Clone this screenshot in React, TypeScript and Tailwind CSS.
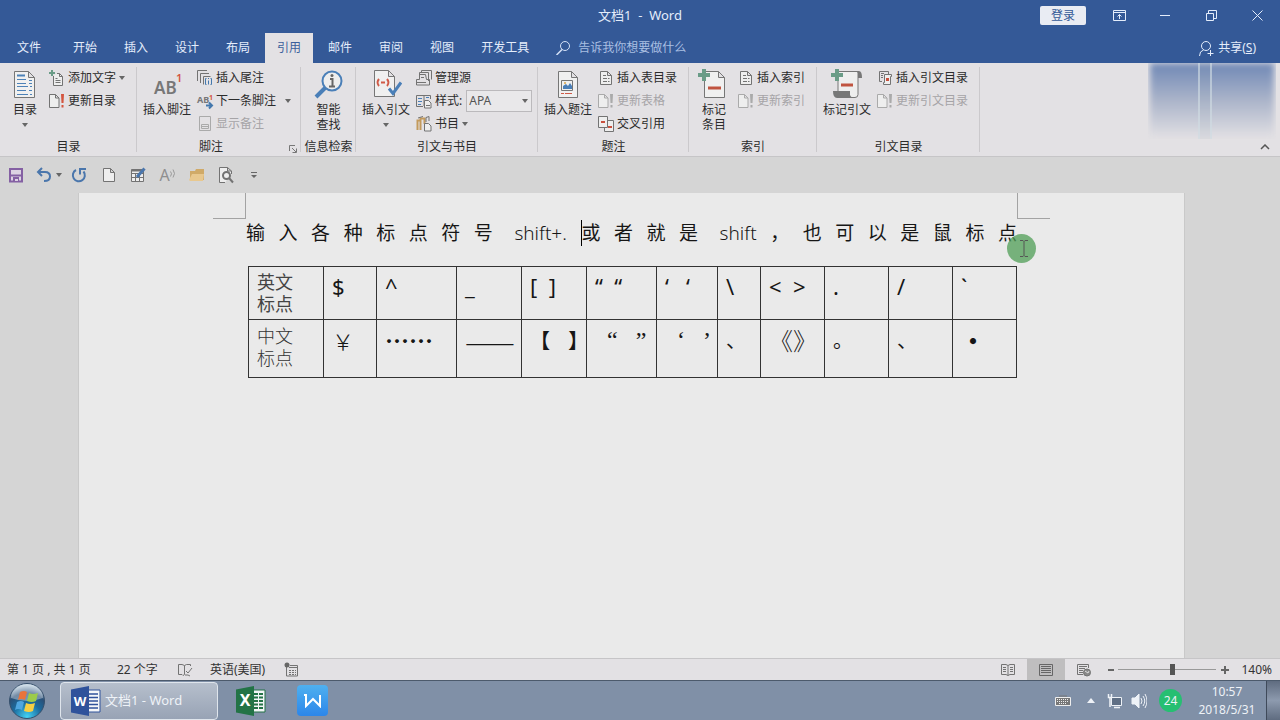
import type { ReactNode } from 'react';
import { useState } from 'react';
import clsx from 'clsx';

interface ChildrenProps {
  children: ReactNode;
}

const tabs = ['开始', '插入', '设计', '布局', '引用', '邮件', '审阅', '视图', '开发工具'];

const columns = [75, 53, 80, 65, 65, 70, 61, 43, 64, 64, 64, 64];
const englishMarks = ['$', '^', '_', '[\u00a0\u00a0]', '“\u00a0\u00a0“', '‘\u00a0\u00a0\u00a0‘', '\\', '<\u00a0\u00a0>', '.', '/', '`'];
const chineseMarks = [
  { text: '￥', style: 'text-[22px] font-light' },
  { text: '……', style: 'text-2xl font-bold' },
  { text: '——', style: 'text-3xl font-light' },
  { text: '【\u00a0\u00a0\u00a0\u00a0】', style: 'text-xl font-bold' },
  { text: '\u00a0\u00a0“\u00a0\u00a0\u00a0”', style: 'font-["Liberation_Serif",serif] text-2xl' },
  { text: '\u00a0\u00a0‘\u00a0\u00a0\u00a0’', style: 'font-["Liberation_Serif",serif] text-2xl' },
  { text: '、', style: 'text-xl' },
  { text: '《》', style: 'text-2xl font-light' },
  { text: '。', style: 'text-xl' },
  { text: '、', style: 'text-xl' },
  { text: '・', style: 'text-2xl font-bold' },
];

function Caret() {
  return (
    <svg viewBox="0 0 6 4" className="h-1 w-1.5 shrink-0" fill="#666">
      <path d="M0 0h6L3 4z" />
    </svg>
  );
}

function Icon({ children }: ChildrenProps) {
  return (
    <svg viewBox="0 0 16 16" className="h-4 w-4 shrink-0 overflow-visible" fill="none" stroke="#737373">
      {children}
    </svg>
  );
}

function BigIcon({ children }: ChildrenProps) {
  return (
    <svg viewBox="0 0 32 36" className="h-9 w-8 shrink-0" fill="none" stroke="#767676">
      {children}
    </svg>
  );
}

function UpdateIcon({ disabled }: { disabled?: boolean }) {
  return (
    <Icon>
      <path d="M.5 1.500h6l3.500 3.500v9.500H.5zM6.500 1.500V5H10" fill="#eee" stroke={disabled ? '#aaa' : '#737373'} />
      <path d="M12 1h3l-.5 9h-2zM12.500 12h2v2.500h-2z" fill={disabled ? '#aaa' : '#d4553f'} stroke="none" />
    </Icon>
  );
}

function ListPageIcon() {
  return (
    <Icon>
      <path d="M2.500 1.500h7l4 4v9h-11zM9.500 1.500v4h4" fill="#eee" />
      <path d="M5 5.500h3M5 8.500h6.500M5 11.500h6.500" strokeDasharray="4 1" />
    </Icon>
  );
}

interface SmallButtonProps {
  icon: ReactNode;
  label: string;
  disabled?: boolean;
  menu?: boolean;
  split?: boolean;
}

function SmallButton({ icon, label, disabled, menu, split }: SmallButtonProps) {
  return (
    <button type="button" disabled={disabled} className="flex h-[23px] items-center gap-[3px] whitespace-nowrap disabled:text-[#a6a4a7]">
      {icon}
      <span>{label}</span>
      {menu && <span className={clsx(split && 'ml-1.5')}><Caret /></span>}
    </button>
  );
}

function BigButton({ icon, lines, menu }: { icon: ReactNode; lines: string[]; menu?: boolean }) {
  return (
    <button type="button" className="flex w-12 shrink-0 flex-col items-center whitespace-nowrap leading-[15px]">
      {icon}
      {lines.map((line) => (
        <span key={line}>{line}</span>
      ))}
      {menu && <span className="mt-1.5"><Caret /></span>}
    </button>
  );
}

interface GroupProps extends ChildrenProps {
  title: string;
  width: string;
  inset?: string;
  launcher?: boolean;
}

function Group({ title, width, inset = 'pl-1.5', launcher, children }: GroupProps) {
  return (
    <section className={clsx('relative flex shrink-0 flex-col pt-[3px] after:absolute after:right-0 after:top-1 after:h-[85px] after:w-px after:bg-[#cbc9cc]', width)}>
      <div className={clsx('flex h-[72px]', inset)}>{children}</div>
      <div className="flex h-[18px] items-center">
        <h2 className="flex-1 whitespace-nowrap text-center leading-[18px]">{title}</h2>
        {launcher && (
          <button type="button" aria-label="脚注选项" className="mr-1 flex h-3 w-3 items-end justify-end">
            <svg viewBox="0 0 8 8" className="h-2 w-2" fill="none" stroke="#777">
              <path d="M.5 6V.5H6M3 3l4 4M7.500 3.500v4h-4" />
            </svg>
          </button>
        )}
      </div>
    </section>
  );
}

function Ribbon() {
  return (
    <div className="relative flex h-[94px] border-b border-[#c6c5c7] bg-[#e3e1e4] text-[#2b2b2b]">
      <Group title="目录" width="w-[137px]" inset="pl-px">
        <BigButton
          lines={['目录']}
          menu
          icon={
            <BigIcon>
              <path d="M5.500 5.500h14l6 6v20h-20zM19.500 5.500v6h6" fill="#f0f0f0" />
              <path d="M8 9.500h8" stroke="#4d82b8" strokeWidth="2" />
              <path d="M8 13.500h9M8 17.500h9M8 20.500h11M8 24.500h9M8 28.500h11M20 14.500h3M20 17.500h3M21 20.500h2M20 24.500h3M21 28.500h2" stroke="#4d82b8" />
            </BigIcon>
          }
        />
        <div>
          <SmallButton
            label="添加文字"
            menu
            icon={
              <Icon>
                <path d="M4.500 6v9.500h9v-9l-3-3H8M10.500 3.500v3h3" fill="#eee" />
                <path d="M6.500 8.500h2M6.500 10.500h5M6.500 12.500h5" />
                <path d="M3 0v6M0 3h6" stroke="#6a9c87" strokeWidth="2" />
              </Icon>
            }
          />
          <SmallButton label="更新目录" icon={<UpdateIcon />} />
        </div>
      </Group>

      <Group title="脚注" width="w-[164px]" launcher>
        <BigButton
          lines={['插入脚注']}
          icon={
            <BigIcon>
              <text x="3" y="28" fontSize="17" fontWeight="600" fill="#777" stroke="none">AB</text>
              <text x="25" y="16" fontSize="11" fontWeight="600" fill="#d4553f" stroke="none">1</text>
            </BigIcon>
          }
        />
        <div className="ml-1.5">
          <SmallButton
            label="插入尾注"
            icon={
              <Icon>
                <path d="M.5 11V.5H10M3.500 13V3.500H12M13.500 6.500h-7v8" />
                <path d="M9.500 8.500h-1v6h1M13.500 8.500h1v6h-1M11.500 10.500v4M11.500 8v1" stroke="#4478ad" />
              </Icon>
            }
          />
          <SmallButton
            label="下一条脚注"
            menu
            split
            icon={
              <Icon>
                <text x="0" y="10" fontSize="9" fontWeight="700" fill="#777" stroke="none">AB</text>
                <text x="12" y="7" fontSize="7" fontWeight="700" fill="#d4553f" stroke="none">1</text>
                <path d="M9 12.500h6M12 9.500l3 3-3 3" stroke="#4478ad" strokeWidth="2" />
              </Icon>
            }
          />
          <SmallButton
            label="显示备注"
            disabled
            icon={
              <Icon>
                <path d="M2.500.500h11v14h-11zM4.500 8.500h7v4h-7zM4.500 10.500h7" stroke="#aaa" />
              </Icon>
            }
          />
        </div>
      </Group>

      <Group title="信息检索" width="w-[55px]" inset="justify-center">
        <BigButton
          lines={['智能', '查找']}
          icon={
            <BigIcon>
              <path d="M13 21L3 31" stroke="#4a7fb8" strokeWidth="4" />
              <circle cx="19" cy="15" r="9.500" fill="#eee" stroke="#4a7fb8" strokeWidth="2" />
              <path d="M17 13h2.500v7M16 20.500h6" stroke="#666" strokeWidth="2" />
              <circle cx="19" cy="9.500" r="1.500" fill="#666" stroke="none" />
            </BigIcon>
          }
        />
      </Group>

      <Group title="引文与书目" width="w-[182px]">
        <BigButton
          lines={['插入引文']}
          menu
          icon={
            <BigIcon>
              <path d="M4.500 4.500h14l6 6v20h-20zM18.500 4.500v6h6" fill="#f0f0f0" />
              <path d="M9 13q-3 3.500 0 7M17 13q3 3.500 0 7M11 16.500h4" stroke="#d05b48" strokeWidth="2" />
              <path d="M19 22.500l4 5 8-11" stroke="#4a7fb8" strokeWidth="3" />
            </BigIcon>
          }
        />
        <div className="ml-1.5">
          <SmallButton
            label="管理源"
            icon={
              <Icon>
                <path d="M5.500 3V.5h10v9M3.500 5V2.500h9V11M.5 15V9.500h3v-5h6l1 5h3V15z" />
                <path d="M1 12.500h9M5 7.500h3" />
              </Icon>
            }
          />
          <div className="flex items-center">
            <label htmlFor="citation-style" className="flex h-[23px] items-center gap-[3px]">
              <Icon>
                <path d="M8 3v10M8 2.500H.5v11H7M8 2.500h6.500V6" />
                <path d="M2 5.500h4M2 8.500h4M2 11.500h3M10 4.500h3" stroke="#4a7fb8" />
                <path d="M8.500 7.500h4l2.500 2.500v5H8.500zM10 12.500h4" fill="#eee" />
              </Icon>
              <span>样式:</span>
            </label>
            <span className="relative ml-1">
              <select id="citation-style" defaultValue="APA" className="block h-[22px] w-[66px] appearance-none border border-[#bbb9bc] bg-[#e9e8ea] px-0.5 text-xs text-[#555]">
                <option>APA</option>
                <option>MLA</option>
              </select>
              <span className="pointer-events-none absolute inset-y-0 right-1 flex items-center"><Caret /></span>
            </span>
          </div>
          <SmallButton
            label="书目"
            menu
            icon={
              <Icon>
                <path d="M1.500 14V4.500h3V14M4.500 13V2.500h4V8" stroke="#c39a5c" strokeWidth="2" />
                <path d="M10 6V1.500l3-1V5M2 2l5-1.500" />
                <path d="M8.500 7.500h4l2.500 2.500v5H8.500z" fill="#eee" />
              </Icon>
            }
          />
        </div>
      </Group>

      <Group title="题注" width="w-[151px]">
        <BigButton
          lines={['插入题注']}
          icon={
            <BigIcon>
              <path d="M6.500 5.500h13l6 6v20h-19zM19.500 5.500v6h6" fill="#f0f0f0" />
              <path d="M9.500 14.500h11v10h-11z" />
              <path d="M11 23v-3l3-2 2 2 2-3 2 3v3z" fill="#4a7fb8" stroke="none" />
              <circle cx="13" cy="17" r="1" fill="#d9a648" stroke="none" />
              <path d="M9 27.500h3M13 27.500h7" stroke="#d05b48" strokeWidth="1" />
            </BigIcon>
          }
        />
        <div className="ml-1.5">
          <SmallButton label="插入表目录" icon={<ListPageIcon />} />
          <SmallButton label="更新表格" disabled icon={<UpdateIcon disabled />} />
          <SmallButton
            label="交叉引用"
            icon={
              <Icon>
                <path d="M.5.5h9v11h-9zM10 4.500h5.500v11h-9V12" fill="#eee" />
                <path d="M3 6h4M10 11h4" stroke="#c9503e" strokeWidth="2" />
              </Icon>
            }
          />
        </div>
      </Group>

      <Group title="索引" width="w-[128px]" inset="pl-px">
        <BigButton
          lines={['标记', '条目']}
          icon={
            <BigIcon>
              <path d="M6.500 5.500h14l6 6v20h-20zM20.500 5.500v6h6" fill="#f0f0f0" />
              <path d="M10 22h13" stroke="#c05440" strokeWidth="3" />
              <path d="M6 3v12M0 9h12" stroke="#6a9c87" strokeWidth="4" />
            </BigIcon>
          }
        />
        <div>
          <SmallButton label="插入索引" icon={<ListPageIcon />} />
          <SmallButton label="更新索引" disabled icon={<UpdateIcon disabled />} />
        </div>
      </Group>

      <Group title="引文目录" width="w-[163px]">
        <BigButton
          lines={['标记引文']}
          icon={
            <BigIcon>
              <path d="M7 5.500h20v23q0 3-3 3H8v-6h-1z" fill="#eee" />
              <path d="M25 5h3q3 0 3 7h-4V7zM2 25h17v4q1 3 5 3H6q-4 0-4-7z" fill="#777" stroke="none" />
              <path d="M10 19h12" stroke="#c05440" strokeWidth="3" />
              <path d="M6 3v12M0 9h12" stroke="#6a9c87" strokeWidth="4" />
            </BigIcon>
          }
        />
        <div className="ml-1.5">
          <SmallButton
            label="插入引文目录"
            icon={
              <Icon>
                <path d="M5 11.500H2.500V1.500h9V4M4 3.500h3M4 5.500h2M4 7.500h2" />
                <path d="M7.500 4.500h7v2h-1v8h-7v-2h1z" fill="#eee" />
                <path d="M9 9.500h3" stroke="#c9503e" strokeWidth="3" />
              </Icon>
            }
          />
          <SmallButton label="更新引文目录" disabled icon={<UpdateIcon disabled />} />
        </div>
      </Group>

      {/* smeared reflection under the share button */}
      <div className="pointer-events-none absolute right-1 top-0 h-[76px] w-32 overflow-hidden">
        <div className="mx-0.5 h-full bg-linear-to-b from-[#7088b5] via-[#acb5ca] to-[#e3e1e4] blur-[3px]" />
        <div className="absolute inset-y-0 left-[50px] w-3.5 border-x-2 border-[#d3dfe6]/60 bg-[#8fa3ae]/10" />
      </div>
      <button type="button" aria-label="折叠功能区" className="absolute bottom-0.5 right-2 flex h-3.5 w-3.5 items-center justify-center">
        <svg viewBox="0 0 10 6" className="h-1.5 w-2.5" fill="none" stroke="#555" strokeWidth="1.500">
          <path d="M1 5l4-4 4 4" />
        </svg>
      </button>
    </div>
  );
}

function TitleBar() {
  return (
    <header className="grid h-[31px] grid-cols-[1fr_auto_1fr] items-center text-[#e4edfb]">
      <span />
      <h1 className="whitespace-pre text-[13px]">文档1  -  Word</h1>
      <div className="flex items-center justify-end">
        <button type="button" className="mr-2.5 h-[19px] w-[46px] rounded-xs bg-[#e9ecf3] text-[#345997]">登录</button>
        <button type="button" aria-label="功能区显示选项" className="flex h-[30px] w-[46px] items-center justify-center">
          <svg viewBox="0 0 13 11" className="h-[11px] w-[13px]" fill="none" stroke="currentColor">
            <path d="M.5.500h12v10H.5zM.5 2.500h12M6.500 9V4.500M4.500 6.500l2-2 2 2" />
          </svg>
        </button>
        <button type="button" aria-label="最小化" className="flex h-[30px] w-[46px] items-center justify-center">
          <span className="h-px w-2.5 bg-current" />
        </button>
        <button type="button" aria-label="还原" className="flex h-[30px] w-[46px] items-center justify-center">
          <svg viewBox="0 0 11 11" className="h-[11px] w-[11px]" fill="none" stroke="currentColor">
            <path d="M.5 3.500h7v7h-7zM2.500 3V.5h8v8H8" />
          </svg>
        </button>
        <button type="button" aria-label="关闭" className="flex h-[30px] w-[46px] items-center justify-center">
          <svg viewBox="0 0 11 11" className="h-[11px] w-[11px]" fill="none" stroke="currentColor">
            <path d="M.5.5l10 10M10.500.5l-10 10" />
          </svg>
        </button>
      </div>
    </header>
  );
}

function TabBar() {
  const [active, setActive] = useState('引用');
  return (
    <nav className="flex h-8 items-end gap-[3px] pr-6 text-[#e4edfb]">
      <button type="button" className="h-[30px] w-[58px]">文件</button>
      {tabs.map((tab) => (
        <button
          key={tab}
          type="button"
          onClick={() => setActive(tab)}
          className={clsx('h-[30px] whitespace-nowrap px-3', tab === active && 'bg-[#e3e1e4] text-[#3b5f9c]')}
        >
          {tab}
        </button>
      ))}
      <label className="ml-3 flex h-[30px] items-center gap-2">
        <svg viewBox="0 0 14 14" className="h-3.5 w-3.5" fill="none" stroke="#d5e2f7">
          <circle cx="9" cy="5" r="4.500" />
          <path d="M6 8.500L.5 14" strokeWidth="1.500" />
        </svg>
        <input type="text" aria-label="告诉我你想要做什么" placeholder="告诉我你想要做什么" className="w-40 bg-transparent text-xs outline-none placeholder:text-[#a9bfe2]" />
      </label>
      <button type="button" className="ml-auto flex h-[30px] items-center gap-1">
        <svg viewBox="0 0 15 15" className="h-[15px] w-[15px]" fill="none" stroke="currentColor">
          <circle cx="7" cy="5" r="4.500" />
          <path d="M.5 15q0-5 4-6M11.500 9v6M8.500 12.500h6" />
        </svg>
        <span>共享(<u>S</u>)</span>
      </button>
    </nav>
  );
}

function QuickButton({ label, width, children }: { label: string; width: string; children: ReactNode }) {
  return (
    <button type="button" aria-label={label} className={clsx('flex h-5 items-center justify-center', width)}>
      {children}
    </button>
  );
}

function QuickAccess() {
  return (
    <div className="flex h-9 items-center bg-[#d5d5d5] pl-px">
      <QuickButton label="保存" width="w-[29px]">
        <Icon>
          <path d="M2 2h12v12.500H2z" fill="#dcd3e2" stroke="#8460a3" strokeWidth="2" />
          <path d="M2 8.500h12" stroke="#8460a3" strokeWidth="2" />
          <path d="M5 10h6v5H5z" fill="#8460a3" stroke="none" />
          <path d="M7 12h3v2H7z" fill="#dcd3e2" stroke="none" />
        </Icon>
      </QuickButton>
      <QuickButton label="撤消" width="w-[34px] gap-1 pl-1">
        <Icon>
          <path d="M6 1L2 5l4 4M2 5h7q5 0 5 4.500T8 14" stroke="#4a76ac" strokeWidth="2" />
        </Icon>
        <Caret />
      </QuickButton>
      <QuickButton label="重复" width="w-[30px]">
        <Icon>
          <path d="M5 3A6 6 0 1 0 12.500 4.500M9 7.500V2h6" stroke="#4a76ac" strokeWidth="2" />
        </Icon>
      </QuickButton>
      <QuickButton label="新建" width="w-[29px]">
        <Icon>
          <path d="M2.500 1.500h7l4 4v9h-11zM9.500 1.500v4h4" fill="#eee" />
        </Icon>
      </QuickButton>
      <QuickButton label="绘制表格" width="w-[30px]">
        <Icon>
          <path d="M1.500 2.500h12v12h-12zM1.500 6.500h12M1.500 10.500h12M5.500 6v8M9.500 6v8" fill="#eee" />
          <path d="M1.500 3.500h10" strokeWidth="2" />
          <path d="M7 10l7.500-8.500" stroke="#4a76ac" strokeWidth="3" />
        </Icon>
      </QuickButton>
      <QuickButton label="朗读" width="w-[29px]">
        <span className="text-base leading-5 text-[#8f8f8f]">A</span>
        <svg viewBox="0 0 6 12" className="h-3 w-1.5" fill="none" stroke="#999">
          <path d="M.5 2.500q2 2 0 5M3 .5q3 4 0 8" />
        </svg>
      </QuickButton>
      <QuickButton label="打开" width="w-[29px]">
        <Icon>
          <path d="M1 13V4h5l1-2h8v11z" fill="#d0aa68" stroke="none" />
          <path d="M0 13l3-6h12l-1 7H1z" fill="#e8c88f" stroke="none" />
        </Icon>
      </QuickButton>
      <QuickButton label="打印预览" width="w-[30px]">
        <Icon>
          <path d="M7 15.500H1.500V.5h8l4 3.500v3M9.500.5V4h4" fill="#eee" />
          <circle cx="8.500" cy="8.500" r="3.500" strokeWidth="2" />
          <path d="M11 11l4 4.500" strokeWidth="2" />
        </Icon>
      </QuickButton>
      <QuickButton label="自定义快速访问工具栏" width="w-[26px]">
        <svg viewBox="0 0 6 6" className="h-1.5 w-1.5" fill="#666">
          <path d="M0 0h6v1H0zM0 3h6L3 6z" />
        </svg>
      </QuickButton>
    </div>
  );
}

function DocumentArea() {
  return (
    <main className="flex min-h-0 flex-1 justify-center overflow-hidden bg-[#d5d5d5] pr-[17px]">
      <article className="relative w-[1107px] border-x border-[#c9c9c9] bg-[#eaeaea] px-[167px] text-[#161616]">
        <div className="-mx-[33px] flex justify-between">
          <div className="h-[26px] w-[33px] border-b border-r border-[#a3a3a3]" />
          <div className="h-[26px] w-[33px] border-b border-l border-[#a3a3a3]" />
        </div>
        <p className="text-justify text-[19px] leading-7 [text-align-last:justify]">
          输入各种标点符号<span className="ml-2 font-light">shift+.</span><span className="-mr-3.5 ml-3.5 border-l border-black" />或者就是<span className="ml-2 font-light">shift</span>，也可以是鼠标点
        </p>
        <div className="pl-0.5 pr-px pt-[19px]">
          <table className="w-full table-fixed border-collapse border border-[#333]">
            <colgroup>
              {columns.map((width, i) => (
                <col key={i} style={{ width }} />
              ))}
            </colgroup>
            <tbody>
              <tr className="h-[53px]">
                <th scope="row" className="border border-[#333] py-1 pl-2 pr-4 text-left align-top text-lg font-normal leading-[22px] text-[#444]">英文标点</th>
                {englishMarks.map((mark) => (
                  <td key={mark} className="whitespace-nowrap border border-[#333] py-1 pl-2 align-top text-[22px] leading-[30px]">{mark}</td>
                ))}
              </tr>
              <tr className="h-[58px]">
                <th scope="row" className="border border-[#333] py-[5px] pl-2 pr-4 text-left align-top text-lg font-light leading-[22px] text-[#333]">中文标点</th>
                {chineseMarks.map((mark, i) => (
                  <td key={i} className={clsx('whitespace-nowrap border border-[#333] py-[5px] pl-2 align-top', !mark.style.includes('Serif') && 'font-["Noto_Sans_CJK_SC",sans-serif]', mark.style)}>
                    <span className="block leading-[30px]">{mark.text}</span>
                  </td>
                ))}
              </tr>
            </tbody>
          </table>
        </div>
        {/* pointer highlight */}
        <div className="absolute right-[148px] top-[41px] flex h-[29px] w-[29px] items-center justify-center rounded-full bg-[#4f9d55]/75">
          <svg viewBox="0 0 8 17" className="ml-1 h-[17px] w-2" fill="none" stroke="#555">
            <path d="M0 .5h3l1 1 1-1h3M4 1.500v14M0 16.500h3l1-1 1 1h3" />
          </svg>
        </div>
      </article>
    </main>
  );
}

function StatusBar() {
  const [zoom, setZoom] = useState(56);
  return (
    <footer className="flex h-[22px] items-center border-t border-[#c6c5c7] bg-[#e3e1e4] pl-[7px] pr-2 text-[#333]">
      <span className="w-[110px] whitespace-nowrap">第 1 页 , 共 1 页</span>
      <span className="w-[60px] whitespace-nowrap">22 个字</span>
      <button type="button" aria-label="校对" className="w-[33px]">
        <Icon>
          <path d="M7.500 3.500v9l-1.500 1-1-1H1.500v-10H5l2.500 1 2-1h4V4M8 13h3l2 1M9 9l2 2 4-5" />
        </Icon>
      </button>
      <span className="w-[74px] whitespace-nowrap">英语(美国)</span>
      <button type="button" aria-label="录制宏">
        <Icon>
          <path d="M2.500 5v9h11V3.500H6M5 5.500h8" />
          <path d="M5 8.500h7M5 10.500h7M5 12.500h7" strokeDasharray="2 1" />
          <circle cx="3" cy="3" r="2.500" fill="#666" stroke="none" />
        </Icon>
      </button>
      <div className="ml-auto flex h-full items-center">
        <button type="button" aria-label="阅读视图" className="flex h-full w-[38px] items-center justify-center">
          <Icon>
            <path d="M8 3.500v10M8 3.500l-2-1H1.500v10H6l2 1 2-1h4.500v-10H10zM3 5.500h3M3 7.500h3M3 9.500h3M10 5.500h3M10 7.500h3M10 9.500h3" />
          </Icon>
        </button>
        <button type="button" aria-label="页面视图" className="flex h-full w-[38px] items-center justify-center bg-[#bfbebf]">
          <Icon>
            <path d="M1.500 2.500h13v11h-13zM3 4.500h10M3 6.500h10M3 8.500h10M3 10.500h10" stroke="#666" />
          </Icon>
        </button>
        <button type="button" aria-label="Web 版式视图" className="flex h-full w-[38px] items-center justify-center">
          <Icon>
            <path d="M7 12.500H1.500v-10h11V6M3 4.500h8M3 6.500h6M3 8.500h4M3 10.500h4" />
            <circle cx="11" cy="10.500" r="3.500" fill="#888" />
            <path d="M9 9l3 2 1-2" stroke="#ddd" />
          </Icon>
        </button>
        <button type="button" aria-label="缩小" className="flex h-full w-[15px] items-center justify-center">
          <span className="h-0.5 w-1.5 bg-[#666]" />
        </button>
        <input
          type="range"
          aria-label="显示比例"
          min={0}
          max={100}
          value={zoom}
          onChange={(e) => setZoom(Number(e.target.value))}
          className="h-3 w-[98px] appearance-none bg-transparent [&::-webkit-slider-runnable-track]:h-px [&::-webkit-slider-runnable-track]:bg-[#999] [&::-webkit-slider-thumb]:-mt-[5px] [&::-webkit-slider-thumb]:h-[11px] [&::-webkit-slider-thumb]:w-[5px] [&::-webkit-slider-thumb]:appearance-none [&::-webkit-slider-thumb]:bg-[#555]"
        />
        <button type="button" aria-label="放大" className="flex h-full w-[18px] items-center justify-center">
          <svg viewBox="0 0 8 8" className="h-2 w-2" stroke="#666" strokeWidth="2">
            <path d="M4 0v8M0 4h8" />
          </svg>
        </button>
        <span className="w-[38px] text-right">140%</span>
      </div>
    </footer>
  );
}

function OfficeIcon({ letter, color }: { letter: string; color: string }) {
  return (
    <svg viewBox="0 0 30 30" className="h-[30px] w-[30px] shrink-0">
      <path d="M15 4h14v22H15z" fill="#f4f6f8" stroke={color} />
      {letter === 'W' ? (
        <path d="M18 8h9M18 11.500h9M18 15h9M18 18.500h9M18 22h9" stroke={color} strokeWidth="1.500" />
      ) : (
        <path d="M18 8h9M18 11.500h9M18 15h9M18 18.500h9M18 22h9" stroke={color} strokeWidth="2" strokeDasharray="4 1" />
      )}
      <path d="M0 3.500L18 0v30L0 26.500z" fill={color} />
      <text x="9" y="20" textAnchor="middle" fontSize={letter === 'W' ? 13 : 16} fontWeight="700" fill="#fff">{letter}</text>
    </svg>
  );
}

function Taskbar() {
  return (
    <div className="flex h-10 items-center border-t border-[#4c5a6c] bg-[#8090a7] pl-2 text-[#eef2f7]">
      <button type="button" aria-label="开始">
        <svg viewBox="0 0 38 38" className="h-[38px] w-[38px]">
          <defs>
            <radialGradient id="orb" cx="50%" cy="95%" r="90%">
              <stop offset="0" stopColor="#43d3f5" />
              <stop offset=".45" stopColor="#1b6c9f" />
              <stop offset=".75" stopColor="#2b4f76" />
              <stop offset="1" stopColor="#b5cbdc" />
            </radialGradient>
          </defs>
          <circle cx="19" cy="19" r="17.500" fill="url(#orb)" stroke="#36506c" />
          <path d="M3 16a16 14 0 0 1 32 0q-16 6-32 0z" fill="#fff" opacity=".35" />
          <path d="M12 10q4-2 7 0l-2 8q-4-2-7 0z" fill="#e8743b" />
          <path d="M21 11q4 2 9 0l-2 8q-4 2-9 0z" fill="#9ccb4a" />
          <path d="M9 20q4-2 7 0l-2 8q-4-2-7 0z" fill="#4fa6e0" />
          <path d="M18 21q4 2 9 0l-2 8q-4 2-9 0z" fill="#f6cf43" />
        </svg>
      </button>
      <button type="button" className="ml-3.5 flex h-[38px] w-[158px] items-center gap-1 rounded-sm border border-[#dfe5ec] bg-linear-to-b from-[#b6bfcc] to-[#98a3b5] pl-2.5 text-[13px]">
        <OfficeIcon letter="W" color="#2f529b" />
        <span>文档1 - Word</span>
      </button>
      <button type="button" aria-label="Excel" className="ml-[18px]">
        <OfficeIcon letter="X" color="#237346" />
      </button>
      <button type="button" aria-label="WPS" className="ml-[31px] flex h-[31px] w-[31px] items-center justify-center rounded-sm bg-linear-to-b from-[#4fb0ef] to-[#2c86ea]">
        <svg viewBox="0 0 20 14" className="h-3.5 w-5" fill="none" stroke="#fff" strokeWidth="2">
          <path d="M1 1h2v11l7-7 7 7V1" />
        </svg>
      </button>
      <div className="ml-auto flex h-full items-center">
        <svg viewBox="0 0 16 11" className="h-[11px] w-4" fill="none" stroke="#eee">
          <path d="M4 1h8" stroke="#777" />
          <path d="M.5 2.500h15v8H.5z" fill="#777" />
          <path d="M2 4.500h12M2 6.500h12M4 8.500h8" strokeDasharray="1 1" />
        </svg>
        <svg viewBox="0 0 8 5" className="ml-4 h-[5px] w-2" fill="#eef2f7"><path d="M4 0l4 5H0z" /></svg>
        <svg viewBox="0 0 16 16" className="ml-3 h-4 w-4" fill="none" stroke="#eef2f7">
          <path d="M4.500 4.500h10v8h-10z" fill="#5f6f85" strokeWidth="1" />
          <path d="M7 14.500h6M1.500 1v3.500h3V1M3 5v9" strokeWidth="1.500" />
        </svg>
        <svg viewBox="0 0 16 16" className="ml-2 h-4 w-4" fill="none" stroke="#eef2f7">
          <path d="M1 5h3l4-4v14l-4-4H1z" fill="#eef2f7" />
          <path d="M10 5q2 3 0 6M12 3q3.500 5 0 10M14 1q4 7 0 14" />
        </svg>
        <span className="ml-3 flex h-[23px] w-[23px] items-center justify-center rounded-full bg-[#26bf72]">24</span>
        <time className="ml-4 w-[58px] whitespace-nowrap text-center leading-[18px]">
          10:57<br />2018/5/31
        </time>
        <button type="button" aria-label="显示桌面" className="ml-2.5 h-full w-3.5 border-l border-[#3f4a5a] bg-linear-to-b from-[#5f6c80] via-[#8d9aae] to-[#5f6c80]" />
      </div>
    </div>
  );
}

export default function App() {
  return (
    <div lang="zh-CN" className="flex h-screen flex-col overflow-hidden bg-[#345997] font-['Noto_Sans','Noto_Sans_CJK_SC',sans-serif] text-xs">
      <TitleBar />
      <TabBar />
      <Ribbon />
      <QuickAccess />
      <DocumentArea />
      <StatusBar />
      <Taskbar />
    </div>
  );
}
